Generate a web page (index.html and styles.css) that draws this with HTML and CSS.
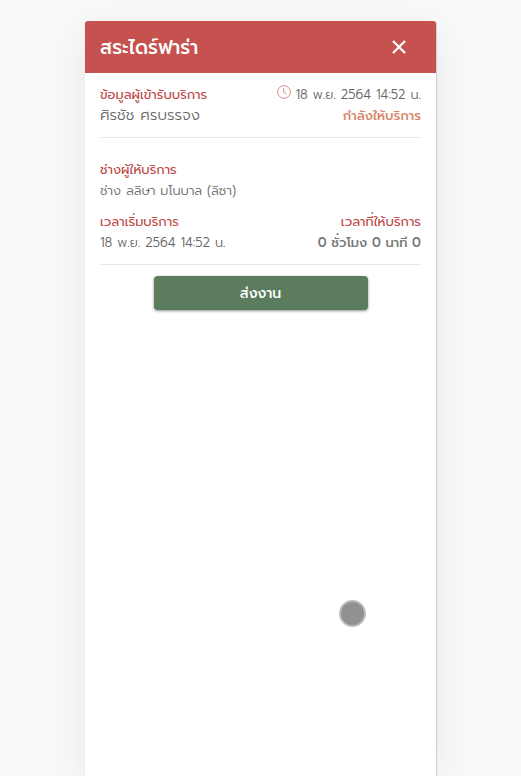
FILE: index.html
```html
<!DOCTYPE html>
<html lang="th">

<head>
  <meta charset="utf-8">
  <meta name="viewport" content="width=device-width, initial-scale=1">
  <title>สระไดร์ฟาร่า</title>
  <link rel="stylesheet" href="styles.css">
</head>

<body>

  <main class="modal">
    <!-- Red header with close button -->
    <header class="modal-header">
      <h1>สระไดร์ฟาร่า</h1>
      <button type="button" class="close" aria-label="ปิด">
        <svg width="14" height="14" viewBox="0 0 14 14" fill="none" stroke="currentColor" stroke-width="2.2">
          <path d="M1 1L13 13M13 1L1 13" />
        </svg>
      </button>
    </header>

    <div class="modal-body">
      <!-- Customer -->
      <section class="row customer">
        <div>
          <h2>ข้อมูลผู้เข้ารับบริการ</h2>
          <p class="name">ศิรชัช ศรบรรจง</p>
        </div>
        <div class="right">
          <p class="date">
            <svg class="clock" width="14" height="14" viewBox="0 0 14 14" fill="none" stroke="currentColor">
              <circle cx="7" cy="7" r="6.4" />
              <path d="M6.7 3.2V7.3L9.4 9" />
            </svg>
            18 พ.ย. 2564 14:52 น.
          </p>
          <p class="status">กำลังให้บริการ</p>
        </div>
      </section>

      <!-- Staff and service time -->
      <section class="service">
        <div>
          <h2>ช่างผู้ให้บริการ</h2>
          <p>ช่าง ลลิษา มโนบาล (ลิซา)</p>
        </div>
        <div class="row">
          <div>
            <h2>เวลาเริ่มบริการ</h2>
            <p>18 พ.ย. 2564 14:52 น.</p>
          </div>
          <div class="right">
            <h2>เวลาที่ให้บริการ</h2>
            <p class="timer">0 ชั่วโมง 0 นาที 0</p>
          </div>
        </div>
      </section>

      <button type="button" class="submit">ส่งงาน</button>
    </div>
  </main>

  <!-- Touch pointer -->
  <div class="pointer"></div>

</body>

</html>
```

FILE: styles.css
```css
* {
  box-sizing: border-box;
}

body {
  margin: 0;
  padding: 21px 16px 0;
  min-height: 100vh;
  display: flex;
  justify-content: center;
  background-color: #f9f9f9;
  font-family: Prompt, Kanit, "Noto Sans Thai", "Noto Sans", sans-serif;
  font-size: 13px;
  font-weight: 300;
  line-height: 21px;
  color: #666;
}

h1,
h2,
p {
  margin: 0;
  white-space: nowrap;
}

.modal {
  width: 100%;
  max-width: 353px;
  background-color: #fff;
  border-right: 1px solid #cfcfca;
  border-left: 1px solid #eee;
  border-radius: 4px 4px 0 0;
  box-shadow: 0 10px 40px rgba(0, 0, 0, 0.07);
}

.modal-header {
  display: flex;
  align-items: center;
  justify-content: space-between;
  height: 52px;
  padding: 0 30px 0 15px;
  border-radius: 3px 3px 0 0;
  background-color: #c5524f;
  color: #fff;
}

.modal-header h1 {
  font-size: 19px;
  font-weight: 500;
}

.close {
  display: flex;
  padding: 0;
  border: 0;
  background: none;
  color: #fff;
  cursor: pointer;
}

.modal-body {
  padding: 11px 15px 0;
}

h2 {
  font-size: 13px;
  font-weight: 400;
  color: #bd4744;
}

.row {
  display: flex;
  justify-content: space-between;
}

.right {
  text-align: right;
}

.customer,
.service {
  padding-bottom: 11px;
  border-bottom: 1px solid #e8e8e8;
}

.name {
  font-size: 15px;
}

.date {
  display: flex;
  gap: 5px;
}

.clock {
  margin-top: 1px;
  color: #d58b88;
}

.status {
  font-weight: 500;
  color: #d98468;
}

.service {
  display: grid;
  gap: 10px;
  padding-top: 21px;
}

.timer {
  font-weight: 500;
  color: #777;
}

.submit {
  display: block;
  width: 214px;
  height: 34px;
  margin: 11px auto 0;
  padding: 0;
  border: 0;
  border-radius: 4px;
  background-color: #5b7d5e;
  box-shadow: 0 1px 3px rgba(0, 0, 0, 0.45);
  color: #fff;
  font-family: inherit;
  font-size: 14px;
  font-weight: 500;
  cursor: pointer;
}

.pointer {
  position: absolute;
  top: 600px;
  left: 339px;
  width: 27px;
  height: 27px;
  border: 2px solid #bdbdbd;
  border-radius: 50%;
  background-color: #919191;
}
```
